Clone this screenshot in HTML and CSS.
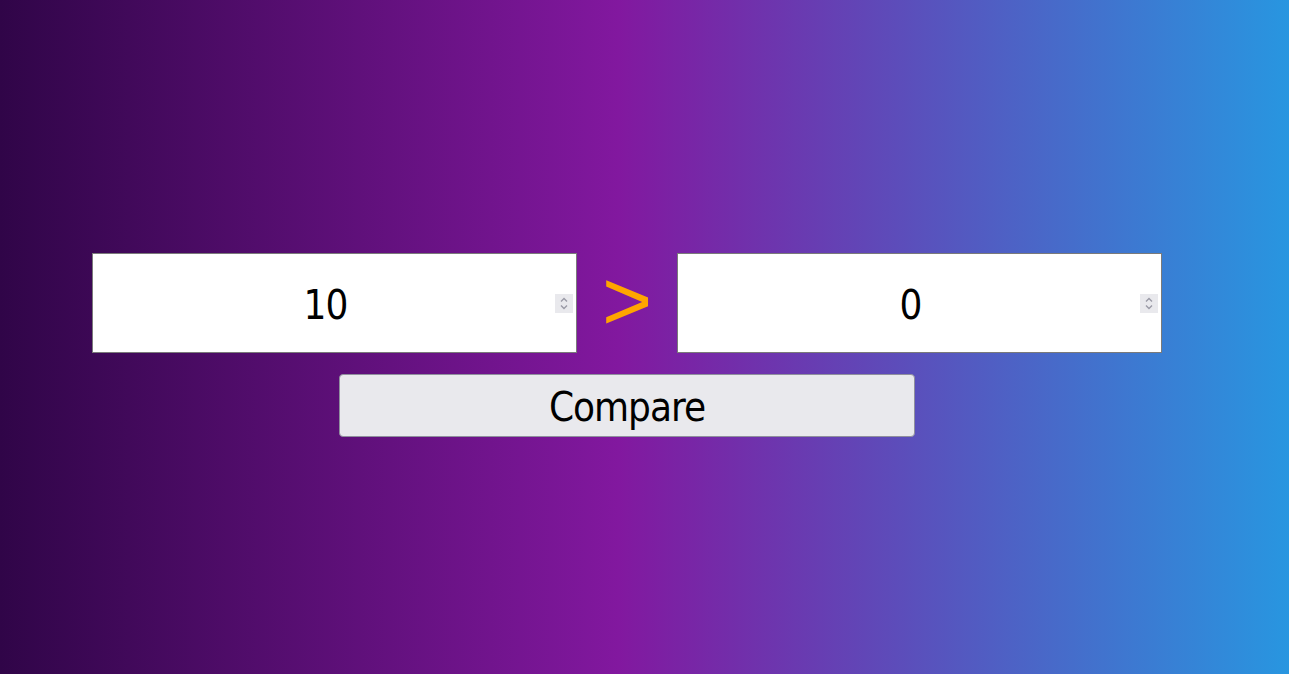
FILE: index.html
```
<!DOCTYPE html>
<html lang="en">
<head>
<meta charset="utf-8">
<title>Compare</title>
<link rel="stylesheet" href="styles.css">
</head>
<body>
<main class="app">
  <div class="row">
    <div class="field">
      <input class="num" type="number" value="10">
      <span class="spin" aria-hidden="true">
        <svg width="18" height="19" viewBox="0 0 18 19"><path d="M6 7.5 L9 4.5 L12 7.5 M6 11.5 L9 14.5 L12 11.5" fill="none" stroke="#9a9aa6" stroke-width="1.4"/></svg>
      </span>
    </div>
    <span class="sign">&gt;</span>
    <div class="field">
      <input class="num" type="number" value="0">
      <span class="spin" aria-hidden="true">
        <svg width="18" height="19" viewBox="0 0 18 19"><path d="M6 7.5 L9 4.5 L12 7.5 M6 11.5 L9 14.5 L12 11.5" fill="none" stroke="#9a9aa6" stroke-width="1.4"/></svg>
      </span>
    </div>
  </div>
  <button class="btn" type="button">Compare</button>
</main>
</body>
</html>
```
FILE: styles.css
```
html, body {
  margin: 0;
  height: 100%;
}
body {
  background: linear-gradient(to right, #300548 0%, #82189f 48%, #2896e0 100%);
  font-family: "DejaVu Sans Condensed", "DejaVu Sans", sans-serif;
  overflow: hidden;
}
.app {
  display: flex;
  flex-direction: column;
  align-items: center;
  gap: 21px;
  width: 1070px;
  margin-left: 92px;
  padding-top: 253px;
}
.row {
  display: flex;
  align-items: center;
  width: 100%;
}
.field {
  position: relative;
  width: 485px;
  height: 100px;
}
.num {
  box-sizing: border-box;
  width: 100%;
  height: 100%;
  border: 1px solid #7a7a7a;
  border-radius: 0;
  padding: 3px 20px 0 2px;
  background: #fff;
  color: #000;
  font-family: inherit;
  font-size: 40px;
  letter-spacing: -1px;
  text-align: center;
  outline: none;
  -moz-appearance: textfield;
}
.num::-webkit-inner-spin-button,
.num::-webkit-outer-spin-button {
  -webkit-appearance: none;
  margin: 0;
}
.spin {
  position: absolute;
  right: 4px;
  top: 41px;
  width: 18px;
  height: 19px;
  background: #e9e9ed;
  display: block;
}
.spin svg {
  display: block;
}
.sign {
  flex: 1;
  text-align: center;
  color: #ffa500;
  font-family: "Liberation Sans", sans-serif;
  font-size: 86px;
  line-height: 1;
  padding-bottom: 6px;
}
.btn {
  box-sizing: border-box;
  width: 576px;
  height: 63px;
  background: #e9e9ed;
  border: 1px solid #8f8f9d;
  border-radius: 4px;
  color: #000;
  font-family: inherit;
  font-size: 40px;
  letter-spacing: -1px;
  padding: 3px 0 0;
}
```
